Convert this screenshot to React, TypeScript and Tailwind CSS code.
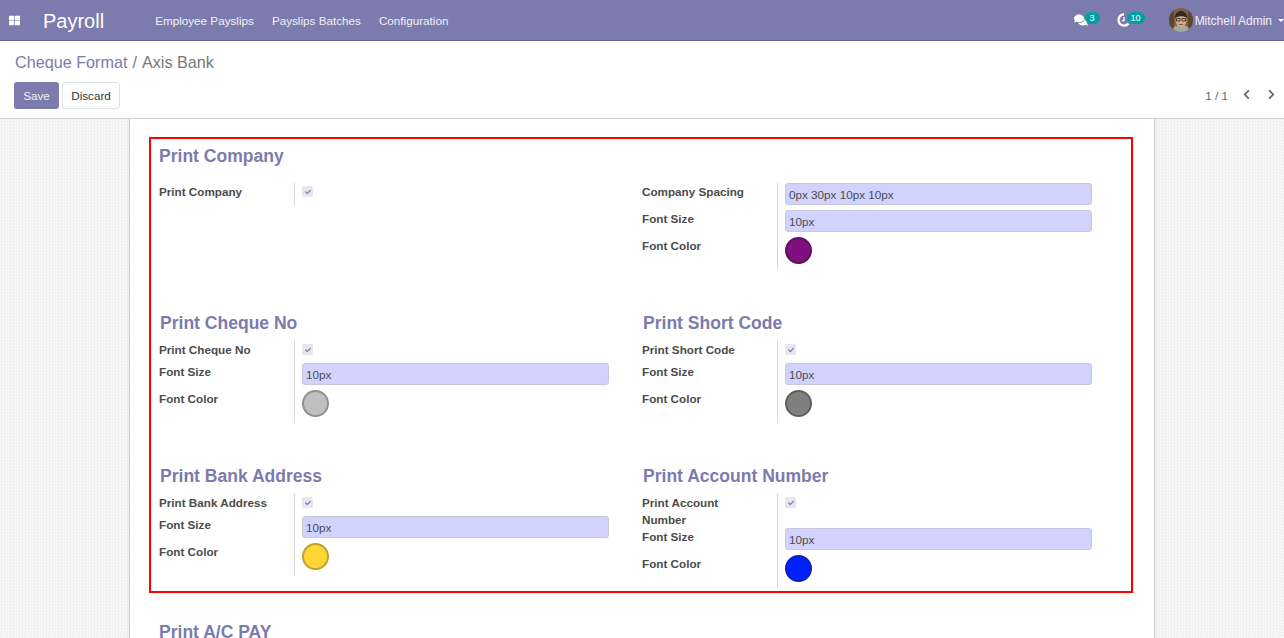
import { FaThLarge, FaComments, FaChevronLeft, FaChevronRight, FaCheck } from "react-icons/fa";

const Check = () => (
  <span className="flex h-[11px] w-[11px] items-center justify-center rounded-[2px] bg-[#e6e6ef] text-[#7c7bad]">
    <FaCheck className="h-[6px] w-[6px]" />
  </span>
);

const Input = ({ value }: { value: string }) => (
  <div className="flex h-[22px] w-[307px] items-center rounded-[3px] border border-[#c8c8d8] bg-[#d2d2ff] pl-[3px] pt-[2px] text-[11.7px] leading-none text-[#4c4c4c]">
    {value}
  </div>
);

const Dot = ({ cls }: { cls: string }) => <div className={`h-[27px] w-[27px] rounded-full border-2 ${cls}`} />;

const Label = ({ text, cls = "" }: { text: string; cls?: string }) => (
  <div className={`w-[135px] shrink-0 text-[11.7px] font-bold leading-[17px] text-[#4c4c4c] ${cls}`}>{text}</div>
);

const Value = ({ children, cls }: { children?: React.ReactNode; cls: string }) => (
  <div className={`flex-1 border-l border-[#d9d9d9] pl-[7px] ${cls}`}>{children}</div>
);

const Row = ({ label, labelCls, valueCls, children }: { label: string; labelCls?: string; valueCls: string; children?: React.ReactNode }) => (
  <div className="flex">
    <Label text={label} cls={labelCls} />
    <Value cls={valueCls}>{children}</Value>
  </div>
);

const CheckRow = ({ label }: { label: string }) => (
  <Row label={label} labelCls="pt-px" valueCls="h-[23px] pt-[4px]">
    <Check />
  </Row>
);

const InputRow = ({ label, value }: { label: string; value: string }) => (
  <Row label={label} valueCls="h-[27px]">
    <Input value={value} />
  </Row>
);

const ColorRow = ({ cls }: { cls: string }) => (
  <Row label="Font Color" valueCls="h-[33px]">
    <Dot cls={cls} />
  </Row>
);

const Heading = ({ text }: { text: string }) => (
  <h2 className="pl-px text-[17.55px] font-bold leading-[20px] text-[#7c7bad]">{text}</h2>
);

const Block = ({ title, check, dot }: { title: string; check: string; dot: string }) => (
  <div className="w-[483px]">
    <Heading text={title} />
    <div className="mt-[7px]">
      <CheckRow label={check} />
      <InputRow label="Font Size" value="10px" />
      <ColorRow cls={dot} />
    </div>
  </div>
);

export default function App() {
  return (
    <div className="flex h-[638px] w-[1284px] flex-col overflow-hidden bg-white font-['Liberation_Sans',Arial,sans-serif]">
      <header className="flex h-[41px] shrink-0 items-center border-b border-[#5f5e97] bg-[#7c7bad] text-white">
        <FaThLarge className="ml-[9px] h-[11px] w-[11px]" />
        <span className="ml-[23px] pt-[2px] text-[20px] leading-none">Payroll</span>
        <nav className="ml-[51px] flex gap-[18px] pt-[2px] text-[11.7px] text-[#f0f0f6]">
          <span>Employee Payslips</span>
          <span>Payslips Batches</span>
          <span>Configuration</span>
        </nav>
        <div className="ml-auto flex items-center">
          <div className="relative h-[14px] w-[14px]">
            <FaComments className="h-[14px] w-[14px]" />
            <span className="absolute left-[11px] top-[-1px] flex h-[12px] w-[15px] items-center justify-center rounded-full bg-[#00a09d] text-[9px] leading-none">3</span>
          </div>
          <div className="relative ml-[29px] h-[14px] w-[14px]">
            <svg viewBox="0 0 14 14" className="h-[14px] w-[14px]" fill="none" stroke="currentColor">
              <path d="M11.5 10.5A5.6 5.6 0 1 1 7 1.4" strokeWidth="2.2" />
              <path d="M7 4v3.6H4.8" strokeWidth="1.3" />
            </svg>
            <span className="absolute left-[10px] top-[-1px] flex h-[12px] w-[18px] items-center justify-center rounded-full bg-[#00a09d] text-[9px] leading-none">10</span>
          </div>
          <svg viewBox="0 0 24 24" className="ml-[38px] h-[24px] w-[24px] rounded-full">
            <rect width="24" height="24" fill="#7d6146" />
            <path d="M0 0h5v24H0zM19 0h5v24h-5z" fill="#5f4630" />
            <path d="M3 24c1-6 4-7 9-7s8 1 9 7z" fill="#a5a898" />
            <ellipse cx="12" cy="12" rx="5.5" ry="7" fill="#d2a88a" />
            <path d="M6 10c0-5 3-7 6-7s6 2 6 7c-3-2.500-8-2.500-12 0z" fill="#33261d" />
            <path d="M7.500 10.500h3.500v2.500H7.500zM13 10.500h3.500v2.500H13z" fill="none" stroke="#33261d" strokeWidth=".8" />
            <path d="M10 16.500h4" stroke="#8a5d4a" />
          </svg>
          <span className="ml-[2px] pt-px text-[12px] text-[#f0f0f6]">Mitchell Admin</span>
          <span className="ml-[6px] h-0 w-0 border-x-[3px] border-t-[3px] border-x-transparent border-t-white" />
        </div>
      </header>

      <div className="h-[78px] shrink-0 border-b border-[#cfcfcf] px-[14px]">
        <div className="flex pl-px pt-[11px] text-[16.2px] leading-[20px]">
          <span className="text-[#7c7bad]">Cheque Format</span>
          <span className="mx-[5px] text-[#777777]">/</span>
          <span className="text-[#777777]">Axis Bank</span>
        </div>
        <div className="mt-[10px] flex items-center">
          <button className="h-[27px] w-[45px] rounded-[3px] bg-[#7c7bad] pt-px text-[11.7px] text-[#f0f0f6]">Save</button>
          <button className="ml-[3px] h-[27px] w-[58px] rounded-[3px] border border-[#dee2e6] bg-white pt-px text-[11.7px] text-[#333333]">Discard</button>
          <span className="ml-auto pt-px text-[11.7px] text-[#666666]">1 / 1</span>
          <FaChevronLeft className="ml-[13px] h-[11px] w-[11px] -translate-y-[1px] text-[#666666]" />
          <FaChevronRight className="ml-[14px] mr-[-7px] h-[11px] w-[11px] -translate-y-[1px] text-[#666666]" />
        </div>
      </div>

      <main className="relative flex-1 overflow-hidden bg-[#f5f5f5] bg-[repeating-conic-gradient(#f0f0f0_0%_25%,#f8f8f8_0%_50%)] bg-[length:3px_3px]">
        <div className="mx-auto h-[800px] w-[1026px] border-x border-[#cfcfcf] bg-white pl-[29px] pt-[27px] shadow-[0_0_3px_rgba(0,0,0,0.08)]">
          <h2 className="text-[17.55px] font-bold leading-[20px] text-[#7c7bad]">Print Company</h2>
          <div className="mt-[17px] flex h-[121px]">
            <div className="w-[483px]">
              <Row label="Print Company" valueCls="h-[23px] pt-[3px]">
                <Check />
              </Row>
            </div>
            <div className="w-[483px]">
              <InputRow label="Company Spacing" value="0px 30px 10px 10px" />
              <InputRow label="Font Size" value="10px" />
              <ColorRow cls="border-[#5f0f5f] bg-[#800f80]" />
            </div>
          </div>
          <div className="mt-[9px] flex h-[144px]">
            <Block title="Print Cheque No" check="Print Cheque No" dot="border-[#8f8f8f] bg-[#bfbfbf]" />
            <Block title="Print Short Code" check="Print Short Code" dot="border-[#5f5f5f] bg-[#7f7f7f]" />
          </div>
          <div className="mt-[9px] flex h-[156px]">
            <Block title="Print Bank Address" check="Print Bank Address" dot="border-[#bf9f2f] bg-[#ffd633]" />
            <div className="w-[483px]">
              <Heading text="Print Account Number" />
              <div className="mt-[7px]">
                <Row label="Print Account Number" labelCls="pr-[40px] pt-px" valueCls="h-[35px] pt-[4px]">
                  <Check />
                </Row>
                <InputRow label="Font Size" value="10px" />
                <ColorRow cls="border-[#0f1fbf] bg-[#0022ff]" />
              </div>
            </div>
          </div>
          <h2 className="text-[17.55px] font-bold leading-[20px] text-[#7c7bad]">Print A/C PAY</h2>
        </div>
        <div className="pointer-events-none absolute left-[149px] top-[18px] h-[456px] w-[984px] border-2 border-[#ff0000]" />
      </main>
    </div>
  );
}
